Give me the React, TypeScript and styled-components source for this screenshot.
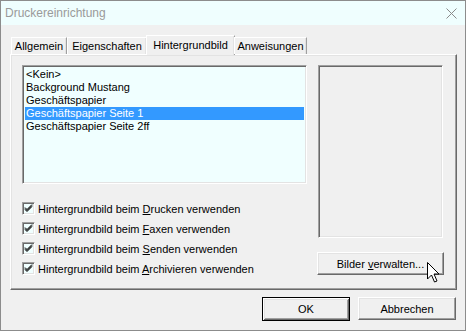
import React from "react";
import styled, { createGlobalStyle, css } from "styled-components";

const Global = createGlobalStyle`
  html, body { margin: 0; padding: 0; background: #f0f0f0; }
  body { font-family: "Liberation Sans", Arial, sans-serif; font-size: 11px; color: #000; }
  * { box-sizing: border-box; }
`;

const Window = styled.div`
  position: relative;
  width: 466px;
  height: 331px;
  border: 1px solid #8c8c8c;
  background: #f0f0f0;
  display: flex;
  flex-direction: column;
  overflow: hidden;
`;

const TitleBar = styled.div`
  height: 24px;
  background: #effefe;
  display: flex;
  align-items: center;
  justify-content: space-between;
  padding: 0 8px 0 4px;
  flex-shrink: 0;
`;

const TitleText = styled.span`
  font-size: 12px;
  color: #9a9a9a;
`;

const Body = styled.div`
  flex: 1;
  display: flex;
  flex-direction: column;
  padding: 10px 8px 0 9px;
`;

const TabRow = styled.div`
  display: flex;
  align-items: flex-end;
  height: 19px;
  padding-left: 1px;
  position: relative;
  z-index: 1;
`;

const Tab = styled.div<{ $active?: boolean; $width: number }>`
  width: ${(p) => p.$width}px;
  height: 17px;
  display: flex;
  align-items: center;
  justify-content: center;
  background: #f0f0f0;
  border-top: 1px solid #fff;
  border-left: 1px solid #fff;
  border-right: 1px solid #a0a0a0;
  box-shadow: inset -1px 0 0 #e3e3e3;
  white-space: nowrap;
  ${(p) =>
    p.$active &&
    css`
      height: 20px;
      margin-bottom: -1px;
      padding-bottom: 2px;
      margin-left: -1px;
      margin-right: -1px;
    `}
`;

const Panel = styled.div`
  width: 447px;
  height: 236px;
  border-top: 1px solid #fff;
  border-left: 1px solid #fff;
  border-right: 1px solid #696969;
  border-bottom: 1px solid #696969;
  box-shadow: inset -1px -1px 0 #a0a0a0, inset 1px 1px 0 #e3e3e3;
  display: grid;
  grid-template-columns: 285px 127px;
  column-gap: 10px;
  padding: 10px 0 0 11px;
`;

const LeftCol = styled.div`
  display: flex;
  flex-direction: column;
`;

const RightCol = styled.div`
  display: flex;
  flex-direction: column;
  align-items: stretch;
`;

const sunken = css`
  border-top: 1px solid #a0a0a0;
  border-left: 1px solid #a0a0a0;
  border-right: 1px solid #fff;
  border-bottom: 1px solid #fff;
  box-shadow: inset 1px 1px 0 #696969, inset -1px -1px 0 #e3e3e3;
`;

const ListBox = styled.div`
  ${sunken};
  height: 119px;
  background: #f0ffff;
  padding: 2px;
  display: flex;
  flex-direction: column;
`;

const ListItem = styled.div<{ $selected?: boolean }>`
  height: 13px;
  line-height: 13px;
  padding-left: 1px;
  white-space: nowrap;
  ${(p) =>
    p.$selected &&
    css`
      background: #3399ff;
      color: #fff;
    `}
`;

const CheckList = styled.div`
  display: flex;
  flex-direction: column;
  gap: 7px;
  margin-top: 18px;
`;

const CheckRow = styled.label`
  display: flex;
  align-items: center;
  gap: 3px;
  height: 13px;
  white-space: nowrap;
`;

const Box = styled.span`
  ${sunken};
  width: 13px;
  height: 13px;
  background: #f0ffff;
  display: flex;
  align-items: center;
  justify-content: center;
  flex-shrink: 0;
`;

const Preview = styled.div`
  ${sunken};
  height: 173px;
  margin: 0 1px;
`;

const raised = css`
  background: #f0f0f0;
  border-top: 1px solid #fff;
  border-left: 1px solid #fff;
  border-right: 1px solid #696969;
  border-bottom: 1px solid #696969;
  box-shadow: inset -1px -1px 0 #a0a0a0, inset 1px 1px 0 #e3e3e3;
`;

const Button = styled.div<{ $width: number; $default?: boolean }>`
  ${raised};
  width: ${(p) => p.$width}px;
  height: ${(p) => (p.$default ? 24 : 23)}px;
  display: flex;
  align-items: center;
  justify-content: center;
  white-space: nowrap;
  ${(p) =>
    p.$default &&
    css`
      border: 1px solid #000;
      box-shadow: inset 1px 1px 0 #fff, inset -1px -1px 0 #696969, inset 2px 2px 0 #e3e3e3,
        inset -2px -2px 0 #a0a0a0;
    `}
`;

const ManageButton = styled(Button)`
  margin-top: 14px;
`;

const Footer = styled.div`
  display: flex;
  justify-content: flex-end;
  gap: 8px;
  padding: 7px 1px 0 0;
`;

const Cursor = styled.svg`
  position: absolute;
  left: 426px;
  top: 261px;
`;

const U = styled.span`
  text-decoration: underline;
  text-underline-offset: 1px;
`;

const Check = () => (
  <svg width="9" height="9" viewBox="0 0 9 9">
    <path d="M1 3.5 L3 5.5 L8 0.5 M1 4.5 L3 6.5 L8 1.5 M1 5.5 L3 7.5 L8 2.5" stroke="#000" strokeWidth="1" fill="none" />
  </svg>
);

const checks: [string, string, string][] = [
  ["Hintergrundbild beim ", "D", "rucken verwenden"],
  ["Hintergrundbild beim ", "F", "axen verwenden"],
  ["Hintergrundbild beim ", "S", "enden verwenden"],
  ["Hintergrundbild beim ", "A", "rchivieren verwenden"],
];

const items = [
  "<Kein>",
  "Background Mustang",
  "Geschäftspapier",
  "Geschäftspapier Seite 1",
  "Geschäftspapier Seite 2ff",
];

export default function App() {
  return (
    <>
      <Global />
      <Window>
        <TitleBar>
          <TitleText>Druckereinrichtung</TitleText>
          <svg width="11" height="11" viewBox="0 0 11 11">
            <path d="M0.5 0.5 L10.5 10.5 M10.5 0.5 L0.5 10.5" stroke="#8a8a8a" strokeWidth="1" />
          </svg>
        </TitleBar>
        <Body>
          <TabRow>
            <Tab $width={56}>Allgemein</Tab>
            <Tab $width={80}>Eigenschaften</Tab>
            <Tab $width={89} $active>
              Hintergrundbild
            </Tab>
            <Tab $width={73}>Anweisungen</Tab>
          </TabRow>
          <Panel>
            <LeftCol>
              <ListBox>
                {items.map((t, i) => (
                  <ListItem key={t} $selected={i === 3}>
                    {t}
                  </ListItem>
                ))}
              </ListBox>
              <CheckList>
                {checks.map(([a, k, b]) => (
                  <CheckRow key={k}>
                    <Box>
                      <Check />
                    </Box>
                    <span>
                      {a}
                      <U>{k}</U>
                      {b}
                    </span>
                  </CheckRow>
                ))}
              </CheckList>
            </LeftCol>
            <RightCol>
              <Preview />
              <ManageButton $width={127}>
                Bilder&nbsp;<U>v</U>erwalten...
              </ManageButton>
            </RightCol>
          </Panel>
          <Footer>
            <Button $width={88} $default>
              OK
            </Button>
            <Button $width={98}>Abbrechen</Button>
          </Footer>
        </Body>
        <Cursor width="13" height="22" viewBox="0 0 13 22">
          <path
            d="M0.5 0.5 L0.5 17 L4.5 13 L7.5 20 L10 19 L7 12 L12 12 Z"
            fill="#fff"
            stroke="#000"
            strokeWidth="1"
          />
        </Cursor>
      </Window>
    </>
  );
}
